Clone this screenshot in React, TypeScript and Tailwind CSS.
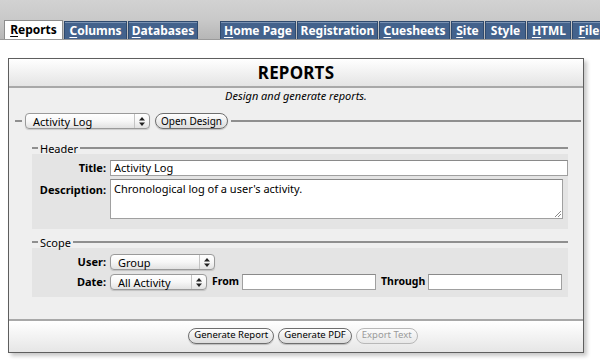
import * as React from "react";

const font = { fontFamily: "'Noto Sans', 'DejaVu Sans', sans-serif" };

type Tab = { label: string; key: number; width: string; active?: boolean };

const tabsLeft: Tab[] = [
    { label: "Reports", key: 0, width: "w-[59px]", active: true },
    { label: "Columns", key: 0, width: "w-[63px]" },
    { label: "Databases", key: 0, width: "w-[70px]" },
];

const tabsRight: Tab[] = [
    { label: "Home Page", key: 0, width: "w-[76px]" },
    { label: "Registration", key: -1, width: "w-[81px]" },
    { label: "Cuesheets", key: 0, width: "w-[71px]" },
    { label: "Site", key: 0, width: "w-[33px]" },
    { label: "Style", key: -1, width: "w-[41px]" },
    { label: "HTML", key: 0, width: "w-[44px]" },
    { label: "Files", key: 0, width: "w-[40px]" },
];

const TabItem = ({ tab }: { tab: Tab }) => {
    const first = tab.key >= 0 ? tab.label.slice(0, 1) : "";
    const rest = tab.key >= 0 ? tab.label.slice(1) : tab.label;
    return (
        <div
            className={
                tab.active
                    ? `${tab.width} h-[19px] shrink-0 bg-white border border-b-0 border-[#8c8c8c] text-black text-[12px] font-bold flex items-center justify-center`
                    : `${tab.width} h-[18px] shrink-0 bg-[#43628c] border border-b-0 border-[#2f4a6e] shadow-[inset_0_1px_0_#7b93b3] text-white text-[12px] font-bold flex items-center justify-center whitespace-nowrap overflow-hidden`
            }
        >
            <span className="underline underline-offset-[2px] decoration-[1px]">{first}</span>
            <span>{rest}</span>
        </div>
    );
};

const Arrows = () => (
    <svg width="6" height="9" viewBox="0 0 6 9">
        <path d="M3 0 L6 3.5 L0 3.5 Z" fill="#222" />
        <path d="M3 9 L6 5.5 L0 5.5 Z" fill="#222" />
    </svg>
);

const PopUp = ({ value, width }: { value: string; width: string }) => (
    <div
        className={`${width} h-[16px] shrink-0 flex items-center rounded-[4px] border border-[#9a9a9a] bg-gradient-to-b from-white via-[#f7f7f7] to-[#e2e2e2] shadow-[0_1px_1px_rgba(0,0,0,0.15)]`}
    >
        <span className="flex-1 pl-[7px] text-[11px] leading-none text-black">{value}</span>
        <span className="w-[15px] h-full border-l border-[#c4c4c4] flex items-center justify-center">
            <Arrows />
        </span>
    </div>
);

const Pill = ({ children, disabled }: { children: React.ReactNode; disabled?: boolean }) => (
    <div
        className={
            disabled
                ? "h-[16px] px-[5px] flex items-center rounded-full border border-[#b8b8b8] bg-gradient-to-b from-[#fbfbfb] to-[#e8e8e8] text-[9.5px] text-[#9a9a9a] whitespace-nowrap"
                : "h-[16px] px-[5px] flex items-center rounded-full border border-[#6e6e6e] bg-gradient-to-b from-white to-[#dcdcdc] shadow-[0_1px_1px_rgba(0,0,0,0.2)] text-[9.5px] text-black whitespace-nowrap"
        }
    >
        {children}
    </div>
);

const TextBox = ({ value, width }: { value?: string; width: string }) => (
    <div
        className={`${width} h-[16px] shrink-0 bg-white border border-[#a0a0a0] border-t-[#8a8a8a] flex items-center pl-[3px] text-[11px] text-black`}
    >
        {value}
    </div>
);

const Legend = ({ title }: { title: string }) => (
    <div className="flex items-center h-[12px]">
        <div className="w-[6px] border-t-2 border-[#8f8f8f]" />
        <span className="px-[2px] text-[11px] leading-none text-black">{title}</span>
        <div className="flex-1 border-t-2 border-[#8f8f8f]" />
    </div>
);

const Label = ({ children }: { children: React.ReactNode }) => (
    <span className="text-[11px] font-bold text-black text-right">{children}</span>
);

export default function App() {
    return (
        <div className="w-[600px] h-[361px] bg-white overflow-hidden" style={font}>
            {/* tab strip */}
            <div className="h-[40px] bg-gradient-to-b from-[#d2d2d2] via-[#c9c9c9] to-[#b6b6b6] flex items-end pl-[4px] gap-[1px] border-b border-[#9a9a9a] overflow-hidden">
                {tabsLeft.map((t) => (
                    <TabItem key={t.label} tab={t} />
                ))}
                <div className="w-[20px] shrink-0" />
                {tabsRight.map((t) => (
                    <TabItem key={t.label} tab={t} />
                ))}
            </div>

            {/* panel */}
            <div className="ml-[8px] mt-[18px] w-[576px] h-[295px] border border-[#5e5e5e] bg-[#efefef] flex flex-col shadow-[3px_3px_4px_rgba(0,0,0,0.22)]">
                <div className="h-[29px] bg-gradient-to-b from-white to-[#e4e4e4] border-b-2 border-[#a8a8a8] flex items-center justify-center">
                    <span className="text-[17px] font-bold text-black tracking-[0.2px]">REPORTS</span>
                </div>

                <div className="flex-1 flex flex-col">
                    <div className="pt-[1px] h-[15px] text-center text-[11px] italic text-black leading-[14px]">
                        Design and generate reports.
                    </div>

                    <div className="mt-[10px] flex items-center pl-[6px] pr-[2px]">
                        <div className="w-[7px] border-t-2 border-[#8f8f8f]" />
                        <div className="w-[3px]" />
                        <PopUp value="Activity Log" width="w-[125px]" />
                        <div className="ml-[5px]">
                            <Pill>
                                <span className="text-[10px]">Open Design</span>
                            </Pill>
                        </div>
                        <div className="ml-[3px] flex-1 border-t-2 border-[#8f8f8f]" />
                    </div>

                    {/* Header fieldset */}
                    <div className="mt-[13px] ml-[23px] mr-[15px]">
                        <Legend title="Header" />
                        <div className="bg-[#e4e4e4] pt-[6px] pb-[10px] grid grid-cols-[74px_1fr] gap-x-[4px] gap-y-[3px]">
                            <div className="h-[16px] flex items-center justify-end">
                                <Label>Title:</Label>
                            </div>
                            <TextBox value="Activity Log" width="w-full" />
                            <div className="flex justify-end pt-[3px]">
                                <Label>Description:</Label>
                            </div>
                            <div className="relative mr-[5px] h-[40px] bg-white border border-[#a0a0a0] border-t-[#8a8a8a] pl-[3px] pt-[1px] text-[11px] text-black">
                                Chronological log of a user's activity.
                                <svg className="absolute right-[1px] bottom-[1px]" width="7" height="7" viewBox="0 0 7 7">
                                    <path d="M1 7 L7 1 M4 7 L7 4" stroke="#888" strokeWidth="1" />
                                </svg>
                            </div>
                        </div>
                    </div>

                    {/* Scope fieldset */}
                    <div className="mt-[7px] ml-[23px] mr-[15px]">
                        <Legend title="Scope" />
                        <div className="bg-[#e4e4e4] pt-[6px] pb-[7px] grid grid-cols-[74px_1fr] gap-x-[4px] gap-y-[4px]">
                            <div className="h-[16px] flex items-center justify-end">
                                <Label>User:</Label>
                            </div>
                            <PopUp value="Group" width="w-[105px]" />
                            <div className="h-[16px] flex items-center justify-end">
                                <Label>Date:</Label>
                            </div>
                            <div className="flex items-center">
                                <PopUp value="All Activity" width="w-[97px]" />
                                <span className="ml-[5px] mr-[3px] text-[10.5px] font-bold">From</span>
                                <TextBox width="w-[134px]" />
                                <span className="ml-[5px] mr-[3px] text-[10.5px] font-bold">Through</span>
                                <TextBox width="w-[134px]" />
                            </div>
                        </div>
                    </div>
                </div>

                {/* footer */}
                <div className="h-[33px] border-t-2 border-[#a8a8a8] bg-gradient-to-b from-white to-[#e6e6e6] flex items-center justify-center gap-[4px] pb-[2px] pl-[14px]">
                    <Pill>Generate Report</Pill>
                    <Pill>Generate PDF</Pill>
                    <Pill disabled>Export Text</Pill>
                </div>
            </div>
        </div>
    );
}
